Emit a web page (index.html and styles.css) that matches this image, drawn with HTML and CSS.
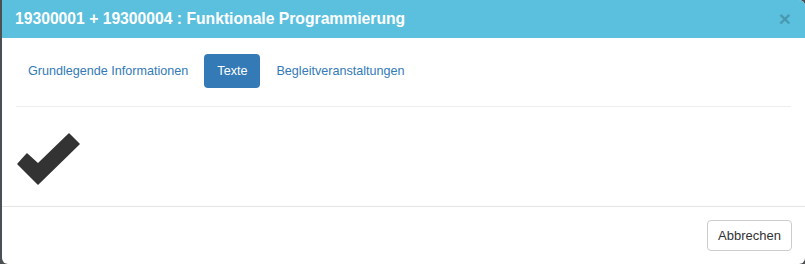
FILE: index.html
```html
<!DOCTYPE html>
<html lang="de">
<head>
    <meta charset="UTF-8">
    <title>Funktionale Programmierung</title>
    <link rel="stylesheet" href="styles.css">
</head>
<body>
    <div class="modal-content">
        <div class="modal-header">
            <h4 class="modal-title">19300001 + 19300004 : Funktionale Programmierung</h4>
            <button class="close" type="button">&times;</button>
        </div>
        <div class="modal-body">
            <!-- tabs -->
            <ul class="nav-pills">
                <li><a href="#">Grundlegende Informationen</a></li>
                <li class="active"><a href="#">Texte</a></li>
                <li><a href="#">Begleitveranstaltungen</a></li>
            </ul>
            <hr>
            <svg class="check" width="63" height="52" viewBox="0 0 63 52">
                <polygon points="10,21 21,31 52,1 62,11 21,51 1,31" fill="#333" stroke="#333" stroke-width="1.5" stroke-linejoin="round"/>
            </svg>
        </div>
        <div class="modal-footer">
            <button class="btn" type="button">Abbrechen</button>
        </div>
    </div>
</body>
</html>
```

FILE: styles.css
```css
body {
    margin: 0;
    background: #4d5053;
    font-family: "Liberation Sans", Arial, sans-serif;
    height: 264px;
    overflow: hidden;
}

.modal-content {
    margin-left: 2px;
    height: 264px;
    background: #fff;
    border-radius: 0 6px 6px 6px;
    overflow: hidden;
    display: flex;
    flex-direction: column;
}

.modal-header {
    background: #5bc0de;
    height: 38px;
    padding: 0 14px 0 13px;
    display: flex;
    align-items: center;
    justify-content: space-between;
}
.modal-title {
    margin: 0;
    color: #fff;
    font-size: 15.7px;
    font-weight: bold;
    line-height: 20px;
}
.close {
    background: none;
    border: 0;
    padding: 0;
    font-family: "Liberation Sans", Arial, sans-serif;
    font-size: 21px;
    font-weight: bold;
    line-height: 1;
    color: #000;
    opacity: 0.2;
    margin-top: -1px;
}

.modal-body {
    padding: 16px 14px 0 14px;
    height: 152px;
    border-bottom: 1px solid #e5e5e5;
}

.nav-pills {
    list-style: none;
    margin: 0;
    padding: 0;
    display: flex;
    gap: 4px;
}
.nav-pills a {
    display: block;
    padding: 8px 12px;
    font-size: 12.6px;
    line-height: 18px;
    color: #337ab7;
    text-decoration: none;
    border-radius: 4px;
}
.nav-pills .active a {
    background: #337ab7;
    color: #fff;
    padding: 8px 13px;
}

hr {
    margin: 18px 0 0 0;
    border: none;
    border-top: 1px solid #eee;
}

.check {
    display: block;
    margin: 26px 0 0 1px;
}

.modal-footer {
    padding: 13px 13px 0 0;
    display: flex;
    justify-content: flex-end;
}
.btn {
    background: #fff;
    border: 1px solid #ccc;
    border-radius: 4px;
    color: #333;
    font-family: "Liberation Sans", Arial, sans-serif;
    font-size: 13px;
    height: 31px;
    padding: 0 10px;
}
```
